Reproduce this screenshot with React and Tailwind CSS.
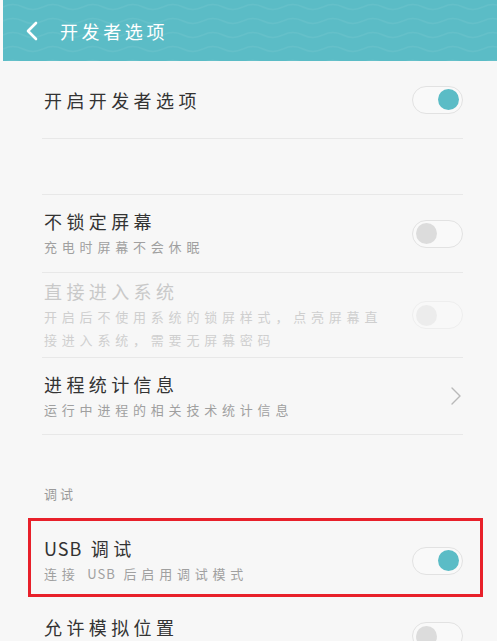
import React from 'react';

const FONT = "font-['Noto_Sans_CJK_SC','Noto_Sans',sans-serif]";

const Toggle = ({ on = false, disabled = false }) => (
  <div
    className={`relative flex h-[28px] w-[51px] shrink-0 items-center rounded-full border-[1.5px] ${
      disabled ? 'border-[#eeeeee] bg-[#f8f8f8]' : 'border-[#e2e2e2] bg-[#f9f9f9]'
    } ${on ? 'justify-end pr-[3px]' : 'justify-start pl-[3px]'}`}
  >
    <div
      className={`h-[21px] w-[21px] rounded-full ${
        on ? 'bg-[#5bbcc6]' : disabled ? 'bg-[#ececec]' : 'bg-[#dcdcdc]'
      }`}
    />
  </div>
);

const Chevron = () => (
  <svg width="12" height="20" viewBox="0 0 12 20" className="shrink-0 mr-[1px]">
    <path d="M2 2 L10 10 L2 18" fill="none" stroke="#b9b9b9" strokeWidth="1.4" strokeLinecap="round" strokeLinejoin="round" />
  </svg>
);

const Divider = () => <div className="h-px bg-[#e8e8e8]" />;

// latin words keep normal spacing inside the wide-tracked CJK text
const Latin = ({ children }) => <span className="tracking-[1px]">{children}</span>;

const Row = ({ title, sub, height, disabled, right }) => (
  <div className={`flex items-center justify-between pl-[2px] ${height}`}>
    <div className="flex flex-col">
      <div
        className={`text-[18px] leading-[24px] tracking-[4.4px] ${disabled ? 'text-[#c9c9c9]' : 'text-[#333333]'}`}
      >
        {title}
      </div>
      {sub && (
        <div
          className={`mt-[2px] text-[13px] leading-[23px] tracking-[4.8px] ${
            disabled ? 'text-[#cfcfcf]' : 'text-[#a0a0a0]'
          }`}
        >
          {sub}
        </div>
      )}
    </div>
    {right}
  </div>
);

export default function App() {
  return (
    <div className={`h-[641px] w-full overflow-hidden bg-[#f7f7f7] ${FONT}`}>
      {/* title bar */}
      <div className="flex bg-[#fafafa]">
        <div className="relative ml-[3px] flex h-[61px] flex-1 items-center overflow-hidden bg-[#5bbcc6]">
          <svg className="absolute inset-0 h-full w-full" aria-hidden="true">
            <defs>
              <pattern id="waves" width="40" height="14" patternUnits="userSpaceOnUse">
                <path d="M0 7 Q10 2 20 7 T40 7" fill="none" stroke="rgba(255,255,255,0.06)" strokeWidth="1.5" />
              </pattern>
            </defs>
            <rect width="100%" height="100%" fill="url(#waves)" />
          </svg>
          <svg width="14" height="20" viewBox="0 0 14 20" className="relative ml-[22px]">
            <path d="M11 2 L3 10 L11 18" fill="none" stroke="white" strokeWidth="2.6" strokeLinecap="round" strokeLinejoin="round" />
          </svg>
          <span className="relative ml-[21px] text-[18px] leading-[24px] tracking-[3.6px] text-white">
            开发者选项
          </span>
        </div>
      </div>

      {/* settings list */}
      <div className="ml-[42px] mr-[34px]">
        <Row title="开启开发者选项" height="h-[77px]" right={<Toggle on />} />
        <Divider />
        <div className="h-[55px]" />
        <Divider />
        <Row
          title="不锁定屏幕"
          sub="充电时屏幕不会休眠"
          height="h-[77px]"
          right={<Toggle />}
        />
        <Divider />
        <Row
          title="直接进入系统"
          sub={
            <>
              开启后不使用系统的锁屏样式，点亮屏幕直
              <br />
              接进入系统，需要无屏幕密码
            </>
          }
          height="h-[84px]"
          disabled
          right={<Toggle disabled />}
        />
        <Divider />
        <Row
          title="进程统计信息"
          sub="运行中进程的相关技术统计信息"
          height="h-[76px]"
          right={<Chevron />}
        />
        <Divider />

        <div className="pl-[2px] pt-[49px] pb-[18px] text-[13px] leading-[20px] tracking-[3px] text-[#9a9a9a]">
          调试
        </div>

        <div className="relative">
          <Row
            title={
              <>
                <Latin>USB</Latin> 调试
              </>
            }
            sub={
              <>
                连接 <Latin>USB</Latin> 后启用调试模式
              </>
            }
            height="h-[77px]"
            right={<Toggle on />}
          />
          <div className="pointer-events-none absolute -left-[14px] -right-[20px] -top-[4px] bottom-[2px] border-[3px] border-[#e8202a]" />
        </div>

        <div className="flex items-start justify-between pl-[2px] pt-[16px]">
          <div className="text-[18px] leading-[24px] tracking-[4.4px] text-[#333333]">允许模拟位置</div>
          <div className="mt-[7px]">
            <Toggle />
          </div>
        </div>
      </div>
    </div>
  );
}
